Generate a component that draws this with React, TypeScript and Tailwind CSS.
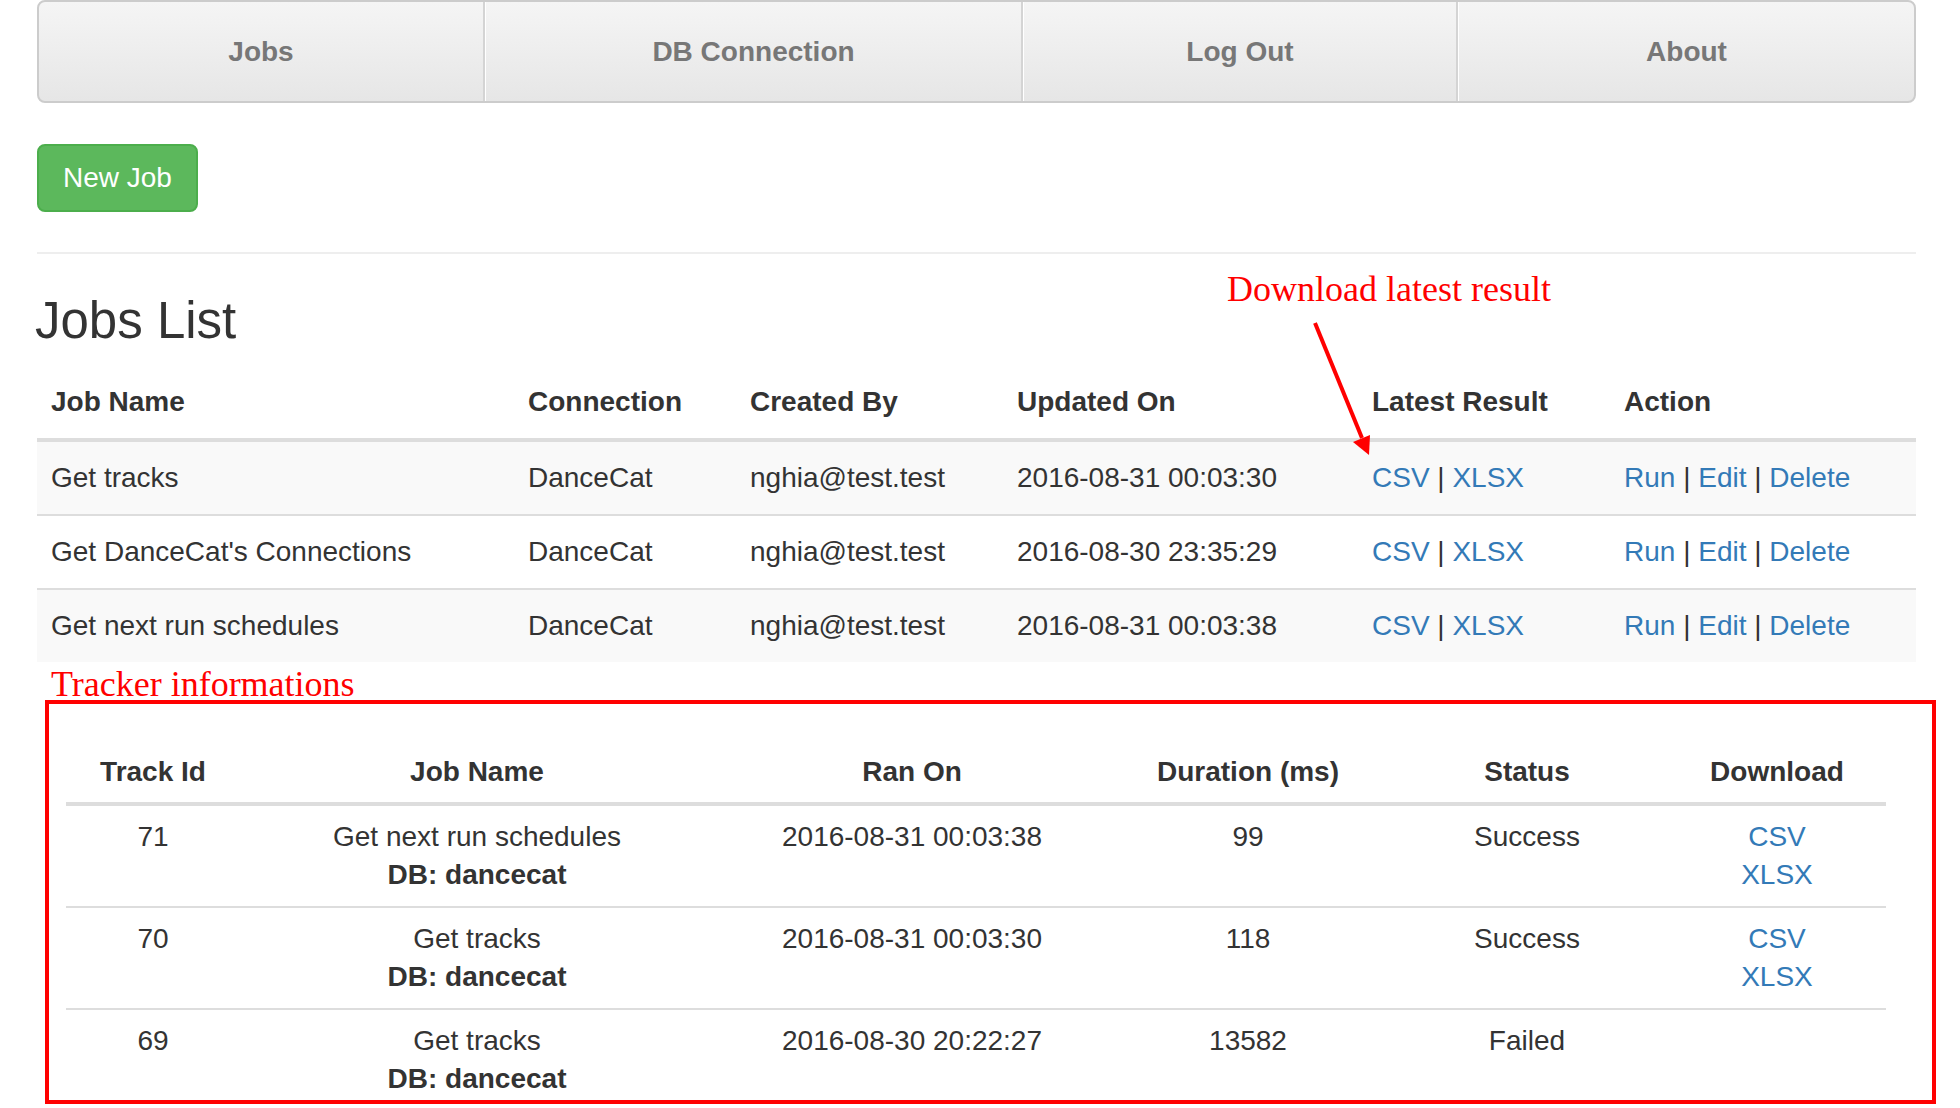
const jobs = [
  { name: 'Get tracks', conn: 'DanceCat', by: 'nghia@test.test', updated: '2016-08-31 00:03:30' },
  { name: "Get DanceCat's Connections", conn: 'DanceCat', by: 'nghia@test.test', updated: '2016-08-30 23:35:29' },
  { name: 'Get next run schedules', conn: 'DanceCat', by: 'nghia@test.test', updated: '2016-08-31 00:03:38' },
];

const tracks = [
  { id: 71, name: 'Get next run schedules', ran: '2016-08-31 00:03:38', duration: '99', status: 'Success', files: true },
  { id: 70, name: 'Get tracks', ran: '2016-08-31 00:03:30', duration: '118', status: 'Success', files: true },
  { id: 69, name: 'Get tracks', ran: '2016-08-30 20:22:27', duration: '13582', status: 'Failed', files: false },
];

function Nav() {
  return (
    <div className="flex h-[103px] rounded-[8px] border-2 border-[#cccccc] bg-gradient-to-b from-[#f5f5f5] to-[#e6e6e6] overflow-hidden">
      <a className="w-[446px] flex items-center justify-center border-r-2 border-[#d4d4d4] text-[28px] font-bold text-[#777777]">Jobs</a>
      <a className="w-[538px] flex items-center justify-center border-l border-r-2 border-l-white border-r-[#d4d4d4] text-[28px] font-bold text-[#777777]">DB Connection</a>
      <a className="w-[435px] flex items-center justify-center border-l border-r-2 border-l-white border-r-[#d4d4d4] text-[28px] font-bold text-[#777777]">Log Out</a>
      <a className="flex-1 flex items-center justify-center border-l border-l-white text-[28px] font-bold text-[#777777]">About</a>
    </div>
  );
}

function Sep() {
  return <span className="text-[#333333]"> | </span>;
}

function JobsTable() {
  return (
    <table className="w-full table-fixed border-collapse text-[28px] leading-[40px] text-[#333333]">
      <colgroup>
        <col className="w-[475px]" />
        <col className="w-[222px]" />
        <col className="w-[267px]" />
        <col className="w-[355px]" />
        <col className="w-[252px]" />
        <col />
      </colgroup>
      <thead>
        <tr>
          {['Job Name', 'Connection', 'Created By', 'Updated On', 'Latest Result', 'Action'].map((h, i) => (
            <th
              key={h}
              className={
                (i === 0 ? 'pl-[14px] pr-[16px] ' : 'px-[16px] ') +
                'text-left font-bold py-[16px] border-b-4 border-[#dddddd] whitespace-nowrap'
              }
            >
              {h}
            </th>
          ))}
        </tr>
      </thead>
      <tbody>
        {jobs.map((j, i) => (
          <tr key={j.name} className={i % 2 === 0 ? 'bg-[#f9f9f9]' : ''}>
            <td className="pl-[14px] pr-[16px] py-[16px] border-t-2 border-[#dddddd] whitespace-nowrap">{j.name}</td>
            <td className="px-[16px] py-[16px] border-t-2 border-[#dddddd]">{j.conn}</td>
            <td className="px-[16px] py-[16px] border-t-2 border-[#dddddd]">{j.by}</td>
            <td className="px-[16px] py-[16px] border-t-2 border-[#dddddd] whitespace-nowrap">{j.updated}</td>
            <td className="px-[16px] py-[16px] border-t-2 border-[#dddddd] whitespace-nowrap">
              <a className="text-[#337ab7]">CSV</a>
              <Sep />
              <a className="text-[#337ab7]">XLSX</a>
            </td>
            <td className="px-[16px] py-[16px] border-t-2 border-[#dddddd] whitespace-nowrap">
              <a className="text-[#337ab7]">Run</a>
              <Sep />
              <a className="text-[#337ab7]">Edit</a>
              <Sep />
              <a className="text-[#337ab7]">Delete</a>
            </td>
          </tr>
        ))}
      </tbody>
    </table>
  );
}

function TrackerTable() {
  return (
    <table className="w-[1820px] ml-[29px] mt-[78px] table-fixed border-collapse text-[28px] leading-[38px] text-[#333333] text-center">
      <colgroup>
        <col className="w-[174px]" />
        <col className="w-[474px]" />
        <col className="w-[396px]" />
        <col className="w-[276px]" />
        <col className="w-[282px]" />
        <col />
      </colgroup>
      <thead>
        <tr>
          {['Track Id', 'Job Name', 'Ran On', 'Duration (ms)', 'Status', 'Download'].map((h) => (
            <th key={h} className="font-bold px-[16px] pt-[13px] pb-[11px] border-b-4 border-[#dddddd] whitespace-nowrap">
              {h}
            </th>
          ))}
        </tr>
      </thead>
      <tbody>
        {tracks.map((t) => (
          <tr key={t.id}>
            <td className="align-top px-[16px] py-[12px] border-t-2 border-[#dddddd]">{t.id}</td>
            <td className="align-top px-[16px] py-[12px] border-t-2 border-[#dddddd]">
              <div>{t.name}</div>
              <div className="font-bold">DB: dancecat</div>
            </td>
            <td className="align-top px-[16px] py-[12px] border-t-2 border-[#dddddd]">{t.ran}</td>
            <td className="align-top px-[16px] py-[12px] border-t-2 border-[#dddddd]">{t.duration}</td>
            <td className="align-top px-[16px] py-[12px] border-t-2 border-[#dddddd]">{t.status}</td>
            <td className="align-top px-[16px] py-[12px] border-t-2 border-[#dddddd]">
              {t.files && (
                <>
                  <div><a className="text-[#337ab7]">CSV</a></div>
                  <div><a className="text-[#337ab7]">XLSX</a></div>
                </>
              )}
            </td>
          </tr>
        ))}
      </tbody>
    </table>
  );
}

export default function App() {
  return (
    <div className="bg-white min-h-screen font-['Liberation_Sans',Arial,sans-serif]">
      <div className="relative ml-[37px] w-[1879px]">
        <Nav />

        <button className="mt-[41px] h-[68px] px-[24px] rounded-[8px] border-2 border-[#4cae4c] bg-[#5cb85c] text-white text-[28px] leading-[40px]">
          New Job
        </button>

        <div className="mt-[40px] h-[2px] bg-[#eeeeee]" />

        <h3 className="mt-[41px] mb-[18px] -ml-[2px] text-[51px] leading-[52.8px] font-medium text-[#333333]">Jobs List</h3>

        <JobsTable />

        <TrackerTable />

        {/* annotations drawn over the page */}
        <div className="absolute left-[1190px] top-[271px] font-['Liberation_Serif',serif] text-[36px] leading-[36px] text-[#ff0000] whitespace-nowrap pointer-events-none">
          Download latest result
        </div>
        <svg className="absolute left-[1263px] top-[310px] pointer-events-none" width="90" height="160" viewBox="0 0 90 160">
          <line x1="15" y1="13" x2="62" y2="128" stroke="#ff0000" strokeWidth="4" />
          <polygon points="53,132 70,125 69,145" fill="#ff0000" />
        </svg>
        <div className="absolute left-[14px] top-[666px] font-['Liberation_Serif',serif] text-[36px] leading-[36px] text-[#ff0000] whitespace-nowrap pointer-events-none">
          Tracker informations
        </div>
        <div className="absolute left-[8px] top-[700px] w-[1891px] h-[404px] border-4 border-[#ff0000] pointer-events-none" />
      </div>
    </div>
  );
}
